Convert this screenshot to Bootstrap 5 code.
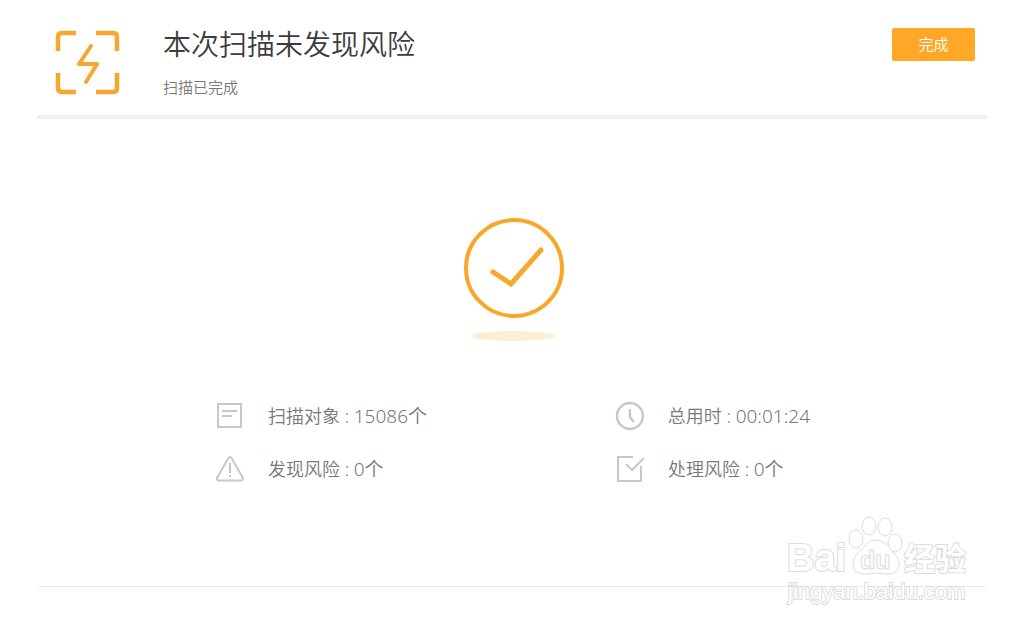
<!DOCTYPE html>
<html lang="zh-CN">
<head>
<meta charset="utf-8">
<meta name="viewport" content="width=device-width, initial-scale=1">
<title>本次扫描未发现风险</title>
<link href="https://cdn.jsdelivr.net/npm/bootstrap@5.3.0/dist/css/bootstrap.min.css" rel="stylesheet">
<style>
body { font-family: "Noto Sans", "Noto Sans CJK SC", sans-serif; font-weight: 350; color: #787878; background: #fff; }
.page-wrap { padding: 0 38px; }
.scan-head { padding: 24px 12px 16px 16px; border-bottom: 4px solid #f0f0f0; }
.scan-icon { margin: 5px 42px 0 0; }
.scan-title { font-size: 28px; line-height: 40px; font-weight: 350; color: #3c3c3c; }
.scan-sub { font-size: 15px; line-height: 24px; margin-top: 11px; }
.btn-finish { --bs-btn-color: #fff; --bs-btn-bg: #ffa726; --bs-btn-border-color: #ffa726; --bs-btn-hover-color: #fff; --bs-btn-hover-bg: #f59b18; --bs-btn-hover-border-color: #f59b18;
  --bs-btn-border-radius: 2px; --bs-btn-font-size: 15px; --bs-btn-line-height: 31px; --bs-btn-padding-y: 0; --bs-btn-padding-x: 24px; --bs-btn-font-weight: 350; margin-top: 4px; min-width: 83px; }
.scan-result { padding-top: 96px; }
.stat-grid { display: grid; grid-template-columns: 400px 195px; row-gap: 23px; margin-top: 56px; font-size: 18px; line-height: 30px; }
.stat-item { gap: 23px; white-space: nowrap; }
.stat-value { font-size: 19px; }
.page-foot { margin-top: 102px; border-top: 1px solid #ececec; position: relative; height: 30px; }
.watermark { position: absolute; right: 12px; top: -72px; }
</style>
</head>
<body>
<div class="page-wrap">
  <header class="scan-head d-flex align-items-start">
    <svg class="scan-icon flex-shrink-0" width="67" height="67" viewBox="0 0 67 67" fill="none" stroke="#f7a72d" aria-hidden="true">
      <path stroke-width="4.500" d="M22 4H8Q4 4 4 8V22M42 4H59Q63 4 63 8V22M4 44V59Q4 63 8 63H22M42 63H59Q63 63 63 59V44"/>
      <path stroke-width="4" stroke-linecap="round" stroke-linejoin="round" d="M37 17L25 35H43L32 53"/>
    </svg>
    <div class="flex-grow-1">
      <h1 class="scan-title mb-0">本次扫描未发现风险</h1>
      <p class="scan-sub mb-0">扫描已完成</p>
    </div>
    <button type="button" class="btn btn-finish">完成</button>
  </header>

  <main class="scan-result d-flex flex-column align-items-center">
    <svg width="104" height="130" viewBox="0 0 104 130" fill="none" aria-hidden="true">
      <circle cx="53" cy="53" r="48" stroke="#f8a72b" stroke-width="4"/>
      <path d="M32 57L50 69L80 35" stroke="#f8a72b" stroke-width="5" stroke-linecap="round" stroke-linejoin="miter"/>
      <ellipse cx="52" cy="121" rx="42" ry="5" fill="#ffeed6"/>
    </svg>
    <div class="stat-grid">
      <div class="stat-item d-flex align-items-center">
        <svg width="30" height="30" viewBox="0 0 30 30" fill="none" stroke="#c8c8c8" stroke-width="2" aria-hidden="true"><path d="M3 3H26V26H3Z"/><path d="M7 10H22M7 15H17"/></svg>
        <span>扫描对象 : <span class="stat-value">15086个</span></span>
      </div>
      <div class="stat-item d-flex align-items-center">
        <svg width="30" height="30" viewBox="0 0 30 30" fill="none" stroke="#c8c8c8" stroke-width="2.500" aria-hidden="true"><circle cx="15" cy="15" r="13"/><path d="M15 8V16L19 21"/></svg>
        <span>总用时 : <span class="stat-value">00:01:24</span></span>
      </div>
      <div class="stat-item d-flex align-items-center">
        <svg width="30" height="30" viewBox="0 0 30 30" fill="none" stroke="#c8c8c8" stroke-width="2" stroke-linejoin="round" aria-hidden="true"><path d="M13.500 4Q15 2 16.500 4L28 24Q28.500 26.500 26 26.500H4Q1.500 26.500 2 24Z"/><path d="M15 9V19M15 21V23"/></svg>
        <span>发现风险 : <span class="stat-value">0个</span></span>
      </div>
      <div class="stat-item d-flex align-items-center">
        <svg width="30" height="30" viewBox="0 0 30 30" fill="none" stroke="#c8c8c8" stroke-width="2" aria-hidden="true"><path d="M18 3H3V27H26V12"/><path d="M11 10L17 16L29 4"/></svg>
        <span>处理风险 : <span class="stat-value">0个</span></span>
      </div>
    </div>
  </main>

  <footer class="page-foot">
    <svg class="watermark" width="190" height="92" viewBox="0 0 190 92" role="img" aria-label="Baidu 经验 jingyan.baidu.com">
      <g fill="#fff" stroke="#dcdcdc" stroke-width="1">
        <g font-family="Liberation Sans, sans-serif" font-weight="700" paint-order="stroke">
          <text x="2" y="56" font-size="38" stroke-width="2">Bai</text>
          <text x="119" y="55" font-family="Noto Sans CJK SC, sans-serif" font-size="31" stroke-width="2">经验</text>
          <text x="3" y="84" font-size="22" font-weight="400" stroke-width="2">jingyan.baidu.com</text>
        </g>
        <ellipse cx="71" cy="24" rx="7" ry="9"/>
        <ellipse cx="84" cy="11" rx="7" ry="9"/>
        <ellipse cx="100" cy="12" rx="7" ry="9"/>
        <ellipse cx="110" cy="28" rx="7" ry="9"/>
        <path d="M91 25C98 25 103 31 108 37Q115 44 114 51Q112 60 101 59Q91 57 83 59Q70 60 68 52Q67 43 75 36C81 30 84 25 91 25Z"/>
        <text x="75" y="54" font-family="Liberation Sans, sans-serif" font-weight="700" font-size="25">du</text>
      </g>
    </svg>
  </footer>
</div>
<script src="https://cdn.jsdelivr.net/npm/bootstrap@5.3.0/dist/js/bootstrap.bundle.min.js"></script>
</body>
</html>
